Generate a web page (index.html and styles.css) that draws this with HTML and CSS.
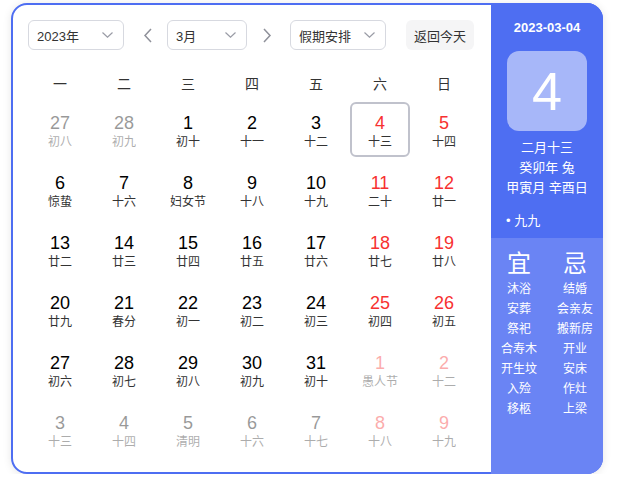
FILE: index.html
```html
<!DOCTYPE html>
<html lang="zh">
<head>
<meta charset="utf-8">
<title>万年历</title>
<link rel="stylesheet" href="styles.css">
</head>
<body>
<div class="calendar">
  <div class="main">
    <div class="toolbar">
      <div class="select sel-year"><span>2023年</span><svg class="chev" width="11" height="6" viewBox="0 0 11 6"><polyline points="0.5,0.5 5.5,5.2 10.5,0.5" fill="none" stroke="#9a9ca6" stroke-width="1.2"/></svg></div>
      <svg class="arrow arrow-prev" width="10" height="15" viewBox="0 0 10 15"><polyline points="8,1 2,7.5 8,14" fill="none" stroke="#8f919a" stroke-width="1.5"/></svg>
      <div class="select sel-month"><span>3月</span><svg class="chev" width="11" height="6" viewBox="0 0 11 6"><polyline points="0.5,0.5 5.5,5.2 10.5,0.5" fill="none" stroke="#9a9ca6" stroke-width="1.2"/></svg></div>
      <svg class="arrow arrow-next" width="10" height="15" viewBox="0 0 10 15"><polyline points="2,1 8,7.5 2,14" fill="none" stroke="#8f919a" stroke-width="1.5"/></svg>
      <div class="select sel-holiday"><span>假期安排</span><svg class="chev" width="11" height="6" viewBox="0 0 11 6"><polyline points="0.5,0.5 5.5,5.2 10.5,0.5" fill="none" stroke="#9a9ca6" stroke-width="1.2"/></svg></div>
      <div class="today-btn">返回今天</div>
    </div>
    <div class="weekdays">
      <span>一</span><span>二</span><span>三</span><span>四</span><span>五</span><span>六</span><span>日</span>
    </div>
    <div class="grid">
      <div class="cell other"><div class="day"><b>27</b><i>初八</i></div></div>
      <div class="cell other"><div class="day"><b>28</b><i>初九</i></div></div>
      <div class="cell"><div class="day"><b>1</b><i>初十</i></div></div>
      <div class="cell"><div class="day"><b>2</b><i>十一</i></div></div>
      <div class="cell"><div class="day"><b>3</b><i>十二</i></div></div>
      <div class="cell weekend"><div class="day selected"><b>4</b><i>十三</i></div></div>
      <div class="cell weekend"><div class="day"><b>5</b><i>十四</i></div></div>

      <div class="cell"><div class="day"><b>6</b><i>惊蛰</i></div></div>
      <div class="cell"><div class="day"><b>7</b><i>十六</i></div></div>
      <div class="cell"><div class="day"><b>8</b><i>妇女节</i></div></div>
      <div class="cell"><div class="day"><b>9</b><i>十八</i></div></div>
      <div class="cell"><div class="day"><b>10</b><i>十九</i></div></div>
      <div class="cell weekend"><div class="day"><b>11</b><i>二十</i></div></div>
      <div class="cell weekend"><div class="day"><b>12</b><i>廿一</i></div></div>

      <div class="cell"><div class="day"><b>13</b><i>廿二</i></div></div>
      <div class="cell"><div class="day"><b>14</b><i>廿三</i></div></div>
      <div class="cell"><div class="day"><b>15</b><i>廿四</i></div></div>
      <div class="cell"><div class="day"><b>16</b><i>廿五</i></div></div>
      <div class="cell"><div class="day"><b>17</b><i>廿六</i></div></div>
      <div class="cell weekend"><div class="day"><b>18</b><i>廿七</i></div></div>
      <div class="cell weekend"><div class="day"><b>19</b><i>廿八</i></div></div>

      <div class="cell"><div class="day"><b>20</b><i>廿九</i></div></div>
      <div class="cell"><div class="day"><b>21</b><i>春分</i></div></div>
      <div class="cell"><div class="day"><b>22</b><i>初一</i></div></div>
      <div class="cell"><div class="day"><b>23</b><i>初二</i></div></div>
      <div class="cell"><div class="day"><b>24</b><i>初三</i></div></div>
      <div class="cell weekend"><div class="day"><b>25</b><i>初四</i></div></div>
      <div class="cell weekend"><div class="day"><b>26</b><i>初五</i></div></div>

      <div class="cell"><div class="day"><b>27</b><i>初六</i></div></div>
      <div class="cell"><div class="day"><b>28</b><i>初七</i></div></div>
      <div class="cell"><div class="day"><b>29</b><i>初八</i></div></div>
      <div class="cell"><div class="day"><b>30</b><i>初九</i></div></div>
      <div class="cell"><div class="day"><b>31</b><i>初十</i></div></div>
      <div class="cell weekend other"><div class="day"><b>1</b><i>愚人节</i></div></div>
      <div class="cell weekend other"><div class="day"><b>2</b><i>十二</i></div></div>

      <div class="cell other"><div class="day"><b>3</b><i>十三</i></div></div>
      <div class="cell other"><div class="day"><b>4</b><i>十四</i></div></div>
      <div class="cell other"><div class="day"><b>5</b><i>清明</i></div></div>
      <div class="cell other"><div class="day"><b>6</b><i>十六</i></div></div>
      <div class="cell other"><div class="day"><b>7</b><i>十七</i></div></div>
      <div class="cell weekend other"><div class="day"><b>8</b><i>十八</i></div></div>
      <div class="cell weekend other"><div class="day"><b>9</b><i>十九</i></div></div>
    </div>
  </div>
  <div class="panel">
    <div class="panel-top">
      <div class="p-date">2023-03-04</div>
      <div class="p-big">4</div>
      <div class="p-lines">
        <div>二月十三</div>
        <div>癸卯年 兔</div>
        <div>甲寅月 辛酉日</div>
      </div>
      <div class="p-festival">• 九九</div>
    </div>
    <div class="panel-bottom">
      <div class="yj-col">
        <div class="yj-head">宜</div>
        <div>沐浴</div><div>安葬</div><div>祭祀</div><div>合寿木</div><div>开生坟</div><div>入殓</div><div>移柩</div>
      </div>
      <div class="yj-col">
        <div class="yj-head">忌</div>
        <div>结婚</div><div>会亲友</div><div>搬新房</div><div>开业</div><div>安床</div><div>作灶</div><div>上梁</div>
      </div>
    </div>
  </div>
</div>
</body>
</html>
```

FILE: styles.css
```css
* { box-sizing: border-box; }
html, body { margin: 0; padding: 0; background: #fff; }
body {
  font-family: "Liberation Sans", Arial, "Noto Sans CJK SC", sans-serif;
  color: #333;
}
.calendar {
  margin: 3px 0 0 11px;
  width: 592px;
  height: 471px;
  border: 2px solid #4e6ef2;
  border-radius: 16px;
  display: flex;
  background: #fff;
  box-shadow: 0 1px 8px rgba(0, 0, 0, 0.1);
}
.main {
  flex: 0 0 478px;
  padding: 15px 15px 0 15px;
}
.toolbar {
  display: flex;
  align-items: center;
  height: 30px;
}
.select {
  height: 30px;
  border: 1px solid #d7d9e0;
  border-radius: 6px;
  display: flex;
  align-items: center;
  justify-content: space-between;
  padding: 0 10px 0 8px;
  font-size: 13px;
  color: #333;
}
.sel-year { width: 96px; }
.sel-month { width: 80px; }
.sel-holiday { width: 96px; }
.chev { display: block; }
.arrow { display: block; }
.arrow-prev { margin: 0 14px 0 19px; }
.arrow-next { margin: 0 18px 0 15px; }
.today-btn {
  margin-left: auto;
  margin-right: 2px;
  width: 68px;
  height: 30px;
  border-radius: 6px;
  background: #f5f5f6;
  font-size: 13px;
  color: #333;
  display: flex;
  align-items: center;
  justify-content: center;
}
.weekdays {
  margin-top: 16px;
  height: 34px;
  display: grid;
  grid-template-columns: repeat(7, 64px);
  align-items: center;
  font-size: 14px;
  color: #333;
  text-align: center;
}
.grid {
  display: grid;
  grid-template-columns: repeat(7, 64px);
  grid-auto-rows: 60px;
}
.day {
  margin: 2px 2px 3px;
  height: 55px;
  border: 2px solid transparent;
  border-radius: 6px;
  display: flex;
  flex-direction: column;
  align-items: center;
  padding-top: 8px;
}
.day.selected { border-color: #c0c2cc; }
.day b {
  font-weight: normal;
  font-size: 18px;
  line-height: 22px;
  color: #000;
}
.day i {
  font-style: normal;
  font-size: 12px;
  line-height: 16px;
  color: #333;
}
.weekend .day b { color: #f73131; }
.other .day { opacity: 0.4; }

.panel {
  flex: 0 0 112px;
  margin: -2px -2px -2px 0;
  border-radius: 0 16px 16px 0;
  overflow: hidden;
  display: flex;
  flex-direction: column;
  color: #fff;
}
.panel-top {
  background: #4e6ef2;
  height: 235px;
  padding-top: 15px;
  display: flex;
  flex-direction: column;
  align-items: center;
}
.p-date {
  font-size: 13px;
  font-weight: bold;
  line-height: 20px;
}
.p-big {
  margin-top: 13px;
  width: 80px;
  height: 80px;
  border-radius: 12px;
  background: rgba(255, 255, 255, 0.5);
  font-size: 54px;
  line-height: 80px;
  text-align: center;
}
.p-lines {
  margin-top: 7px;
  font-size: 13px;
  line-height: 20px;
  text-align: center;
}
.p-festival {
  align-self: flex-start;
  margin: 13px 0 0 15px;
  font-size: 13px;
  line-height: 20px;
}
.panel-bottom {
  flex: 1;
  background: #6a84f4;
  display: grid;
  grid-template-columns: 56px 56px;
  padding-top: 11px;
  font-size: 12px;
  line-height: 20px;
  text-align: center;
}
.yj-head {
  font-size: 24px;
  line-height: 30px;
}
```
